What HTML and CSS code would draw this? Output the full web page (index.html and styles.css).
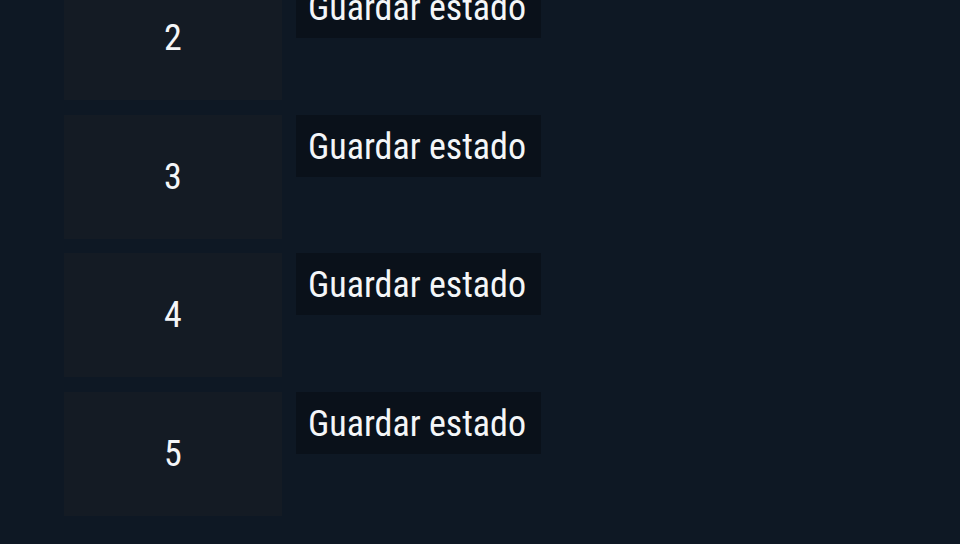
FILE: index.html
```html
<!DOCTYPE html>
<html lang="es">
<head>
    <meta charset="UTF-8">
    <title>Estados</title>
    <link rel="stylesheet" href="styles.css">
</head>
<body>
    <div class="slots">
        <div class="slot"><div class="slot-num">2</div><button class="save-btn">Guardar estado</button></div>
        <div class="slot"><div class="slot-num">3</div><button class="save-btn">Guardar estado</button></div>
        <div class="slot"><div class="slot-num">4</div><button class="save-btn">Guardar estado</button></div>
        <div class="slot"><div class="slot-num">5</div><button class="save-btn">Guardar estado</button></div>
    </div>
</body>
</html>
```

FILE: styles.css
```css
body {
    margin: 0;
    background-color: #0e1824;
    font-family: "Roboto Condensed", Roboto, sans-serif;
    color: #f4f6f8;
}

.slots {
    display: flex;
    flex-direction: column;
    gap: 14.5px;
    margin-top: -24px;
    padding-left: 64px;
}

.slot {
    display: flex;
    align-items: flex-start;
    gap: 14px;
}

.slot-num {
    width: 218px;
    height: 124px;
    display: flex;
    align-items: center;
    justify-content: center;
    background-color: #141b24;
    font-size: 36px;
}

.save-btn {
    height: 62px;
    padding: 2px 15px 0 12px;
    border: none;
    background-color: #0a111a;
    color: #f4f6f8;
    font-family: inherit;
    font-size: 36px;
}
```
